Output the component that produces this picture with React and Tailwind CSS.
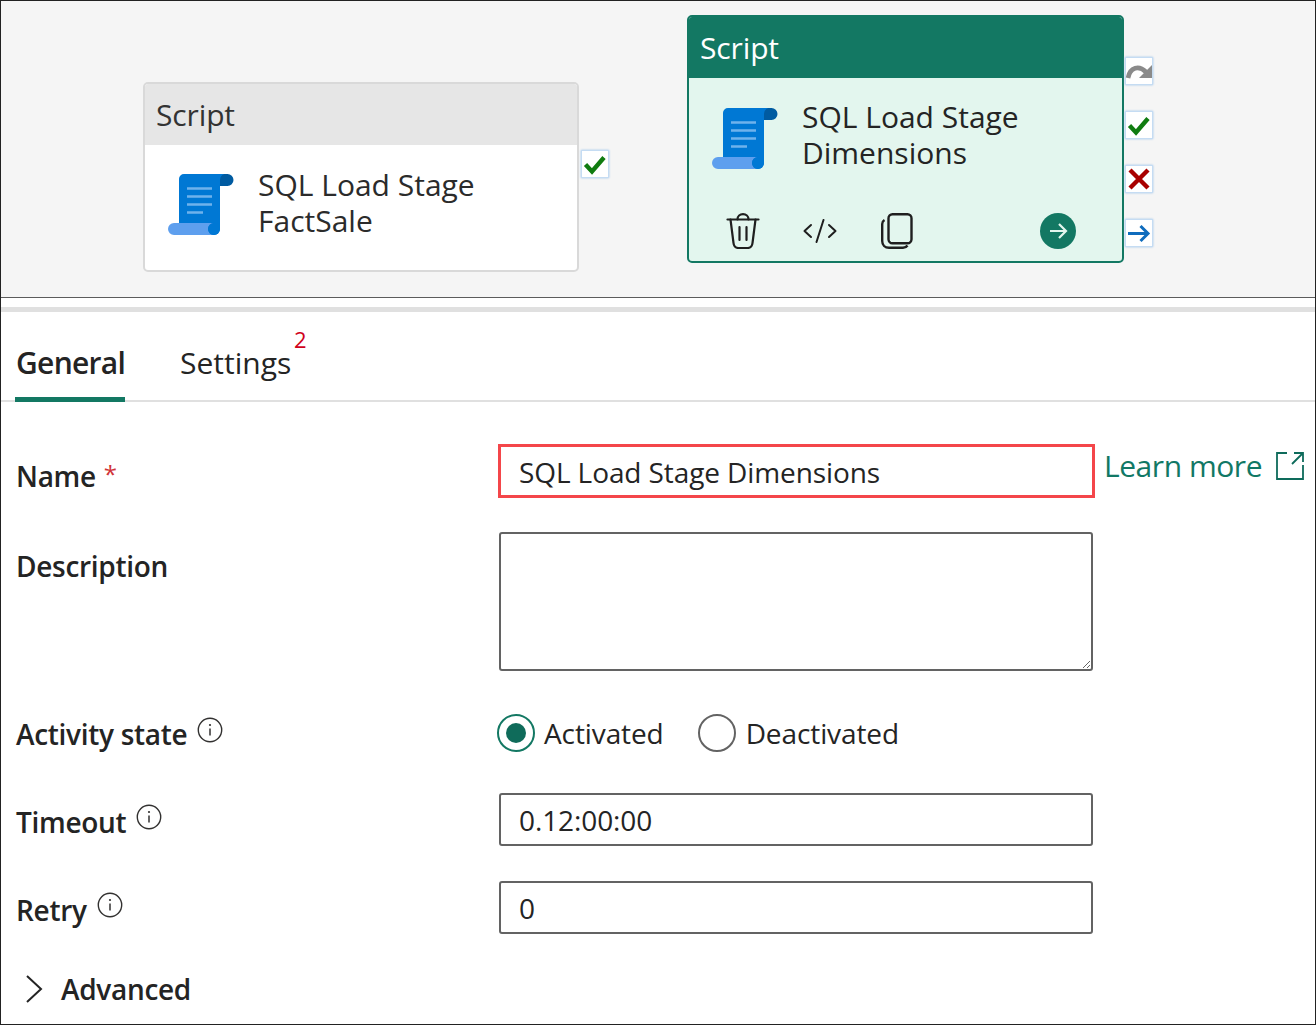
const ScrollIcon = ({ className }) => (
  <svg className={className} viewBox="0 0 66 62" width="66" height="62">
    <path d="M16 0H60V12H52V55a6 6 0 0 1-6 6H11V5a5 5 0 0 1 5-5z" fill="#0078d4" />
    <path d="M59.5 0a6 6 0 0 1 0 12H52V6a6 6 0 0 1 7.5-6z" fill="#005ba1" />
    <path d="M6 49H46a6 6 0 0 0 0 12H6a6 6 0 0 1 0-12z" fill="#5e9fee" />
    <path d="M46 49h6v6a6 6 0 0 1-6 6a6 6 0 0 1 0-12z" fill="#0078d4" />
    <path d="M19 14.5H44M19 22.5H44M19 30.5H44M19 38.5H35" stroke="#6fb2ec" strokeWidth="2.4" />
  </svg>
)

const CheckIcon = () => (
  <svg viewBox="0 0 24 24" width="24" height="24">
    <path d="M2.5 12.5L9 19.5L21 5.5" fill="none" stroke="#107c10" strokeWidth="4.4" />
  </svg>
)

const SideButton = ({ children }) => (
  <div className="w-[28px] h-[28px] bg-white border border-[#c5dcf3] shadow-[0_0_2px_#9cc3ea] flex items-center justify-center">
    {children}
  </div>
)

const InfoIcon = ({ className }) => (
  <svg className={className} viewBox="0 0 26 26" width="26" height="26">
    <circle cx="13" cy="13" r="11.7" fill="none" stroke="#323130" strokeWidth="1.4" />
    <circle cx="13" cy="8" r="1.1" fill="#323130" />
    <path d="M13 11.5V18.5" stroke="#323130" strokeWidth="1.5" />
  </svg>
)

const TextInput = ({ value, red }) => (
  <input
    readOnly
    value={value}
    className={
      red
        ? 'w-[597px] h-[54px] -mt-px -ml-px border-[3px] border-[#f4464a] pl-[18px] pt-[2px] text-[28px] text-[#242424] outline-none tracking-[-0.1px] shrink-0'
        : 'w-[594px] h-[53px] -mt-px border-2 border-[#636363] rounded-[3px] pl-[18px] pt-[1px] text-[28px] text-[#242424] outline-none tracking-[-0.1px]'
    }
  />
)

const Label = ({ children, className }) => (
  <span className={`pl-px text-[28px] font-semibold text-[#242424] tracking-[-0.3px] leading-[36px] ${className || ''}`}>{children}</span>
)

export default function App() {
  return (
    <div className="relative w-[1316px] h-[1025px] bg-white overflow-hidden border border-[#222] font-['Open_Sans','Noto_Sans',sans-serif]">

      <div className="relative h-[297px] bg-[#f5f5f5] border-b border-[#5c5c5c]">
        {/* first node */}
        <div className="absolute left-[142px] top-[81px] w-[436px] h-[190px] bg-white border-2 border-[#d9d9d9] rounded-[5px] overflow-hidden">
          <div className="h-[61px] bg-[#e6e6e6] pl-[11px] flex items-center text-[30px] text-[#333] tracking-[-0.13px]">Script</div>
          <div className="flex pl-[23px] pt-[29px] gap-[24px]">
            <ScrollIcon className="shrink-0" />
            <div className="text-[30px] leading-[36px] text-[#2b2b2b] -mt-[7px]">
              SQL Load Stage<br />FactSale
            </div>
          </div>
        </div>
        <div className="absolute left-[580px] top-[149px]">
          <SideButton><CheckIcon /></SideButton>
        </div>

        {/* selected node */}
        <div className="absolute left-[686px] top-[14px] w-[437px] h-[248px] bg-[#e3f6ee] border-2 border-[#137863] rounded-[5px] overflow-hidden">
          <div className="h-[61px] bg-[#137863] pl-[11px] flex items-center text-[30px] text-white tracking-[-0.13px]">Script</div>
          <div className="flex pl-[23px] pt-[30px] gap-[24px]">
            <ScrollIcon className="shrink-0" />
            <div className="text-[30px] leading-[36px] text-[#242424] -mt-[9px]">
              SQL Load Stage<br />Dimensions
            </div>
          </div>
          <div className="flex items-center pl-[37px] pt-[42px]">
            <svg viewBox="0 0 34 36" width="34" height="36">
              <g fill="none" stroke="#1f1f1f" strokeWidth="2.2" strokeLinecap="round" strokeLinejoin="round">
                <path d="M1.5 6.5H32.5" />
                <path d="M11.5 6.5C11.5 3 14 1.2 17 1.2S22.5 3 22.5 6.5" />
                <path d="M4.5 6.5L7.5 30C7.8 33 9.8 35 12.5 35H21.5C24.2 35 26.2 33 26.5 30L29.5 6.5" />
                <path d="M13.5 14V27M20.5 14V27" />
              </g>
            </svg>
            <svg className="ml-[43px]" viewBox="0 0 34 24" width="34" height="24">
              <g fill="none" stroke="#1f1f1f" strokeWidth="2" strokeLinecap="round" strokeLinejoin="round">
                <path d="M8 6L1.5 12L8 18M26 6L32.5 12L26 18" />
                <path d="M20.5 1L13.5 23" />
              </g>
            </svg>
            <svg className="ml-[44px]" viewBox="0 0 32 36" width="32" height="36">
              <g fill="none" stroke="#1f1f1f" strokeWidth="2.4" strokeLinejoin="round">
                <rect x="7.5" y="1.2" width="23" height="29" rx="4" />
                <path d="M3.5 7C1.8 8 1.2 9.2 1.2 11V28C1.2 32 4 34.8 8 34.8H22C24 34.8 25.5 34 26.5 32.5" />
              </g>
            </svg>
            <div className="ml-[127px] w-[36px] h-[36px] rounded-full bg-[#137863] flex items-center justify-center">
              <svg viewBox="0 0 20 20" width="20" height="20">
                <path d="M2 10H18M11 3L18 10L11 17" fill="none" stroke="#e3f6ee" strokeWidth="2.2" />
              </svg>
            </div>
          </div>
        </div>
        <div className="absolute left-[1124px] top-[56px] flex flex-col gap-[26px]">
          <SideButton>
            <svg className="shrink-0" viewBox="0 0 28 20" width="28" height="20">
              <path d="M3 17C5 6 14 4 21 11" fill="none" stroke="#8a8a8a" strokeWidth="4.6" />
              <path d="M27 4V17H14z" fill="#8a8a8a" />
            </svg>
          </SideButton>
          <SideButton><CheckIcon /></SideButton>
          <SideButton>
            <svg viewBox="0 0 24 24" width="24" height="24">
              <path d="M3 3L21 21M21 3L3 21" stroke="#a80000" strokeWidth="4.4" />
            </svg>
          </SideButton>
          <SideButton>
            <svg viewBox="0 0 24 24" width="24" height="24">
              <path d="M1 12.5H21M13.5 5L21 12.5L13.5 20" fill="none" stroke="#0f6cbd" strokeWidth="3" />
            </svg>
          </SideButton>
        </div>
      </div>

      <div className="mt-[9px] h-[5px] bg-[#e0e0e0]" />

      {/* tabs */}
      <div className="flex h-[90px] border-b-2 border-[#e0e0e0] pl-[14px]">
        <div className="w-[110px] h-[90px] border-b-[5px] border-[#137863] pl-px pt-[31px] text-[30px] leading-[40px] font-semibold text-[#242424] tracking-[-0.7px]">General</div>
        <div className="relative ml-[55px] pt-[31px] text-[30px] leading-[40px] text-[#242424]">
          Settings
          <span className="absolute left-[114px] top-[14px] text-[22px] leading-[26px] text-[#d0021b]">2</span>
        </div>
      </div>

      {/* form */}
      <div className="pt-[43px] pl-[14px]">
        <div className="flex h-[52px]">
          <div className="w-[484px] pt-[11px]">
            <Label>Name <span className="text-[#d13438] font-normal text-[24px] ml-px align-[4px]">*</span></Label>
          </div>
          <TextInput value="SQL Load Stage Dimensions" red />
          <a className="ml-[9px] mt-[1px] flex items-start text-[#117865] text-[30px] leading-[40px] tracking-[-0.45px]">
            Learn more
            <svg className="ml-[14px] mt-[6px] shrink-0" viewBox="0 0 28 28" width="28" height="28">
              <path d="M11 1H1V27H27V13M16 12L27 1M18 1H27V10" fill="none" stroke="#0e6b5b" strokeWidth="1.8" />
            </svg>
          </a>
        </div>

        <div className="flex mt-[35px] h-[139px]">
          <div className="w-[484px] pt-[16px]"><Label>Description</Label></div>
          <textarea readOnly className="w-[594px] h-[139px] border-2 border-[#636363] rounded-[3px] outline-none" />
        </div>

        <div className="flex items-center mt-[43px] h-[37px]">
          <div className="w-[482px] flex items-center pt-[2px]">
            <Label>Activity state</Label>
            <InfoIcon className="ml-[10px] -mt-[8px]" />
          </div>
          <div className="flex items-center text-[28px] text-[#242424] tracking-[-0.1px]">
            <span className="w-[38px] h-[38px] rounded-full border-2 border-[#137863] flex items-center justify-center">
              <span className="w-[20px] h-[20px] rounded-full bg-[#0f6b5a]" />
            </span>
            <span className="ml-[9px]">Activated</span>
            <span className="ml-[34px] w-[38px] h-[38px] rounded-full border-2 border-[#636363]" />
            <span className="ml-[10px]">Deactivated</span>
          </div>
        </div>

        <div className="flex mt-[43px] h-[52px]">
          <div className="w-[484px] flex items-start pt-[10px]">
            <Label>Timeout</Label>
            <InfoIcon className="ml-[10px]" />
          </div>
          <TextInput value="0.12:00:00" />
        </div>

        <div className="flex mt-[36px] h-[52px]">
          <div className="w-[484px] flex items-start pt-[10px]">
            <Label>Retry</Label>
            <InfoIcon className="ml-[10px]" />
          </div>
          <TextInput value="0" />
        </div>

        <div className="flex items-center mt-[37px] h-[36px]">
          <svg className="ml-[11px]" viewBox="0 0 18 28" width="18" height="28">
            <path d="M1 1L15 14L1 27" fill="none" stroke="#242424" strokeWidth="2" />
          </svg>
          <Label className="ml-[16px]">Advanced</Label>
        </div>
      </div>
    </div>
  )
}
